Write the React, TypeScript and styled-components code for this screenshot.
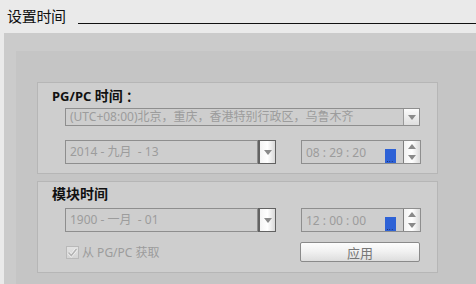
import React from "react";
import styled, { createGlobalStyle } from "styled-components";

const Global = createGlobalStyle`
  html, body { margin: 0; padding: 0; background: #eaeaea; }
  body { font-family: "Noto Sans", "Noto Sans CJK SC", sans-serif; }
  * { box-sizing: border-box; }
`;

const Page = styled.div`
  width: 476px;
  height: 284px;
  display: flex;
  flex-direction: column;
  overflow: hidden;
  background: #eaeaea;
`;

const Header = styled.div`
  height: 33px;
  display: flex;
  align-items: flex-start;
  padding: 6px 0 0 7px;
`;

const Title = styled.div`
  font-family: "Noto Sans CJK SC", sans-serif;
  font-size: 15px;
  line-height: 20px;
  color: #111;
  letter-spacing: -0.3px;
`;

const Rule = styled.div`
  flex: 1;
  height: 1px;
  background: #111;
  margin: 17px 0 0 12px;
`;

const Outer = styled.div`
  flex: 1;
  margin-left: 4px;
  background: #cbcbcb;
  padding: 18px 0 0 12px;
  display: flex;
`;

const Inner = styled.div`
  flex: 1;
  background: #c5c5c5;
  padding: 31px 0 0 21px;
  display: flex;
  flex-direction: column;
  gap: 7px;
`;

const Group = styled.div<{ $h: number; $pt: number }>`
  width: 401px;
  height: ${(p) => p.$h}px;
  flex: none;
  border: 1px solid #b6b6b6;
  background: #cecece;
  padding: ${(p) => p.$pt}px 0 0 14px;
  display: flex;
  flex-direction: column;
`;

const GroupTitle = styled.div`
  font-family: "Noto Sans", "Noto Sans CJK SC", sans-serif;
  font-weight: 700;
  font-size: 13px;
  line-height: 16px;
  height: 16px;
  color: #111;
  white-space: pre;
`;

const Cjk = styled.span`
  font-size: 14px;
`;

const Row = styled.div<{ $mt: number }>`
  display: flex;
  align-items: center;
  margin: ${(p) => p.$mt}px 0 0 13px;
`;

const Field = styled.div<{ $w: number; $h: number }>`
  width: ${(p) => p.$w}px;
  height: ${(p) => p.$h}px;
  border: 1px solid #8e8e8e;
  display: flex;
  align-items: center;
  padding-left: 4px;
  font-size: 12px;
  color: #9c9c9c;
  white-space: pre;
  overflow: hidden;
  position: relative;
  flex: none;
`;

const FieldText = styled.span`
  flex: 1;
  font-family: "Noto Sans", "Noto Sans CJK SC", sans-serif;
  font-size: 12px;
  line-height: 14px;
`;

const InnerDrop = styled.div`
  width: 16px;
  align-self: stretch;
  border-left: 1px solid #9a9a9a;
  background: linear-gradient(#fbfbfb, #dedede);
  display: flex;
  align-items: center;
  justify-content: center;
`;

const DropBtn = styled.div`
  width: 18px;
  height: 24px;
  border: 1px solid #626262;
  border-left-width: 2px;
  background: linear-gradient(90deg, #f4f4f4, #ffffff 50%, #d8d8d8);
  display: flex;
  align-items: center;
  justify-content: center;
  flex: none;
`;

const Arrow = styled.div<{ $up?: boolean }>`
  width: 0;
  height: 0;
  border-left: 4px solid transparent;
  border-right: 4px solid transparent;
  ${(p) => (p.$up ? "border-bottom: 5px solid #8a8a8a;" : "border-top: 5px solid #8a8a8a;")}
`;

const TimeField = styled.div`
  width: 120px;
  height: 24px;
  margin-left: 25px;
  border: 1px solid #8e8e8e;
  display: flex;
  flex: none;
`;

const TimeText = styled.div`
  flex: 1;
  display: flex;
  align-items: center;
  padding-left: 4px;
  font-family: "Noto Sans", sans-serif;
  font-size: 12px;
  color: #9c9c9c;
  white-space: pre;
`;

const Picker = styled.div`
  width: 11px;
  height: 14px;
  align-self: flex-end;
  margin: 0 7px 0 0;
  background: #2e62d6;
  position: relative;
`;

const Dots = styled.span`
  position: absolute;
  left: 2px;
  bottom: 1px;
  width: 7px;
  height: 1px;
  background-image: linear-gradient(90deg, #1a2a66 50%, transparent 50%);
  background-size: 2.4px 1px;
`;

const Spinner = styled.div`
  width: 17px;
  border-left: 1px solid #7e7e7e;
  display: flex;
  flex-direction: column;
  background: linear-gradient(90deg, #f2f2f2, #ffffff 50%, #dadada);
`;

const SpinHalf = styled.div`
  flex: 1;
  display: flex;
  align-items: center;
  justify-content: center;
`;

const CheckRow = styled.div`
  display: flex;
  align-items: center;
  margin: 10px 0 0 14px;
`;

const CheckBox = styled.div`
  width: 13px;
  height: 13px;
  border: 1px solid #b9b9b9;
  background: linear-gradient(#e2e2e2, #d4d4d4);
  display: flex;
  align-items: center;
  justify-content: center;
  flex: none;
`;

const CheckLabel = styled.span`
  width: 218px;
  margin-left: 3px;
  font-family: "Noto Sans", "Noto Sans CJK SC", sans-serif;
  font-size: 12px;
  color: #9c9c9c;
  flex: none;
`;

const Button = styled.div`
  width: 120px;
  height: 20px;
  border: 1px solid #8a8a8a;
  border-radius: 2px;
  background: linear-gradient(#fdfdfd, #f0f0f0 50%, #dddddd);
  display: flex;
  align-items: center;
  justify-content: center;
  font-family: "Noto Sans CJK SC", sans-serif;
  font-size: 13px;
  color: #777;
  flex: none;
`;

const DateCombo = ({ text }: { text: string }) => (
  <>
    <Field $w={193} $h={24}>
      <FieldText>{text}</FieldText>
    </Field>
    <DropBtn>
      <Arrow />
    </DropBtn>
  </>
);

const Time = ({ value }: { value: string }) => (
  <TimeField>
    <TimeText>{value}</TimeText>
    <Picker>
      <Dots />
    </Picker>
    <Spinner>
      <SpinHalf>
        <Arrow $up />
      </SpinHalf>
      <SpinHalf>
        <Arrow />
      </SpinHalf>
    </Spinner>
  </TimeField>
);

export default function App() {
  return (
    <Page>
      <Global />
      <Header>
        <Title>设置时间</Title>
        <Rule />
      </Header>
      <Outer>
        <Inner>
          <Group $h={92} $pt={5}>
            <GroupTitle>
              PG/PC <Cjk>时间</Cjk> ：
            </GroupTitle>
            <Row $mt={4}>
              <Field $w={355} $h={18}>
                <FieldText>(UTC+08:00)北京，重庆，香港特别行政区，乌鲁木齐</FieldText>
                <InnerDrop>
                  <Arrow />
                </InnerDrop>
              </Field>
            </Row>
            <Row $mt={14}>
              <DateCombo text="2014 - 九月  - 13" />
              <Time value="08 : 29 : 20" />
            </Row>
          </Group>
          <Group $h={92} $pt={4}>
            <GroupTitle>
              <Cjk>模块时间</Cjk>
            </GroupTitle>
            <Row $mt={6}>
              <DateCombo text="1900 - 一月  - 01" />
              <Time value="12 : 00 : 00" />
            </Row>
            <CheckRow>
              <CheckBox>
                <svg width="11" height="11" viewBox="0 0 11 11">
                  <path d="M1.5 5.5 L4.3 8.5 L9.5 2" fill="none" stroke="#f4f4f4" strokeWidth="3" />
                  <path d="M1.5 5.5 L4.3 8.5 L9.5 2" fill="none" stroke="#b3b3b3" strokeWidth="1.6" />
                </svg>
              </CheckBox>
              <CheckLabel>从 PG/PC 获取</CheckLabel>
              <Button>应用</Button>
            </CheckRow>
          </Group>
        </Inner>
      </Outer>
    </Page>
  );
}
